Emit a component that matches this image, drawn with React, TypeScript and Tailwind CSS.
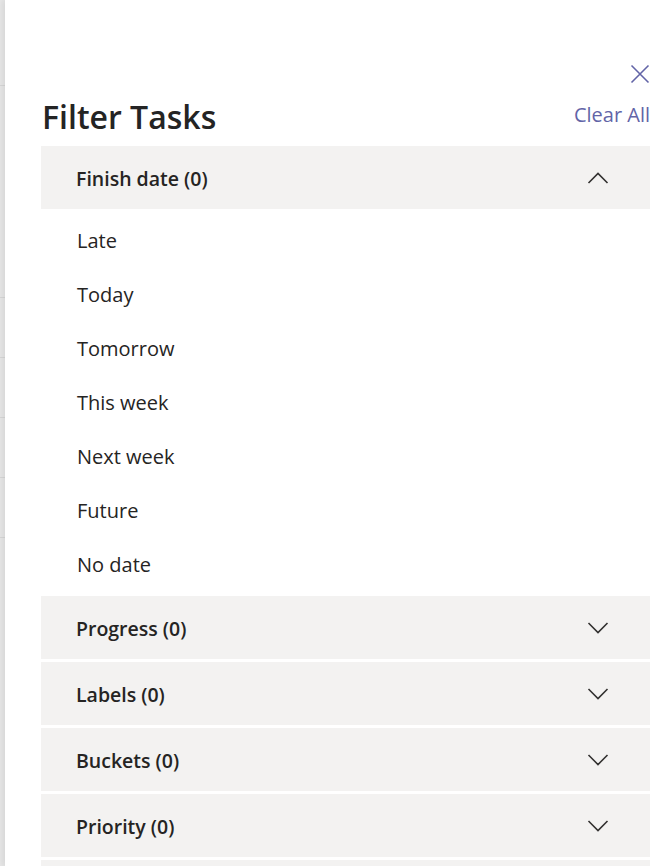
import React from "react";

const Chevron = ({ up = false }: { up?: boolean }) => (
  <svg width="22" height="12" viewBox="0 0 22 12" fill="none" className="block">
    {up ? (
      <path d="M1.5 11 L11 1.5 L20.5 11" stroke="#323130" strokeWidth="1.6" />
    ) : (
      <path d="M1.5 1 L11 10.5 L20.5 1" stroke="#323130" strokeWidth="1.6" />
    )}
  </svg>
);

const Header = ({ label, up = false }: { label?: string; up?: boolean }) => (
  <div className="flex h-[63px] shrink-0 items-center justify-between bg-[#f3f2f1] pl-[35px] pr-[41px]">
    <span className="pt-[3px] text-[19.5px] font-semibold text-[#252423]">{label}</span>
    <Chevron up={up} />
  </div>
);

const items = ["Late", "Today", "Tomorrow", "This week", "Next week", "Future", "No date"];

export default function App() {
  return (
    <div
      className="flex h-[866px] w-[668px] overflow-hidden bg-white"
      style={{ fontFamily: '"Open Sans", "Noto Sans", sans-serif' }}
    >
      <div className="flex w-[5px] shrink-0 flex-col bg-[#e6e6e6]">
        <div className="h-[86px] shrink-0 border-b border-[#d6d6d6]" />
        <div className="h-[212px] shrink-0 border-b border-[#d6d6d6]" />
        <div className="h-[60px] shrink-0 border-b border-[#d6d6d6]" />
        <div className="h-[60px] shrink-0 border-b border-[#d6d6d6]" />
        <div className="h-[60px] shrink-0 border-b border-[#d6d6d6]" />
        <div className="h-[60px] shrink-0 border-b border-[#d6d6d6]" />
      </div>
      <div className="flex flex-1 flex-col bg-white pl-[36px] pr-[18px] shadow-[-2px_0_6px_rgba(0,0,0,0.08)]">
        <div className="flex shrink-0 justify-end pt-[64px]">
          <button className="flex h-[20px] w-[20px] items-center justify-center">
            <svg width="20" height="20" viewBox="0 0 20 20" fill="none">
              <path d="M1.5 1.5 L18.5 18.5 M18.5 1.5 L1.5 18.5" stroke="#6264a7" strokeWidth="1.6" />
            </svg>
          </button>
        </div>
        <div className="mt-[13px] flex shrink-0 items-end justify-between">
          <h1 className="ml-[1px] text-[32px] font-semibold leading-[40px] text-[#242424]">Filter Tasks</h1>
          <span className="pb-[9px] text-[20px] leading-[26px] text-[#6264a7]">Clear All</span>
        </div>
        <div className="mt-[9px] flex flex-col">
          <Header label="Finish date (0)" up />
          <div className="flex shrink-0 flex-col pb-[4px] pt-[5px]">
            {items.map((it) => (
              <div key={it} className="flex h-[54px] items-center pl-[36px] text-[20px] text-[#252423]">
                {it}
              </div>
            ))}
          </div>
          <div className="flex flex-col gap-[3px]">
            <Header label="Progress (0)" />
            <Header label="Labels (0)" />
            <Header label="Buckets (0)" />
            <Header label="Priority (0)" />
            <Header />
          </div>
        </div>
      </div>
    </div>
  );
}
